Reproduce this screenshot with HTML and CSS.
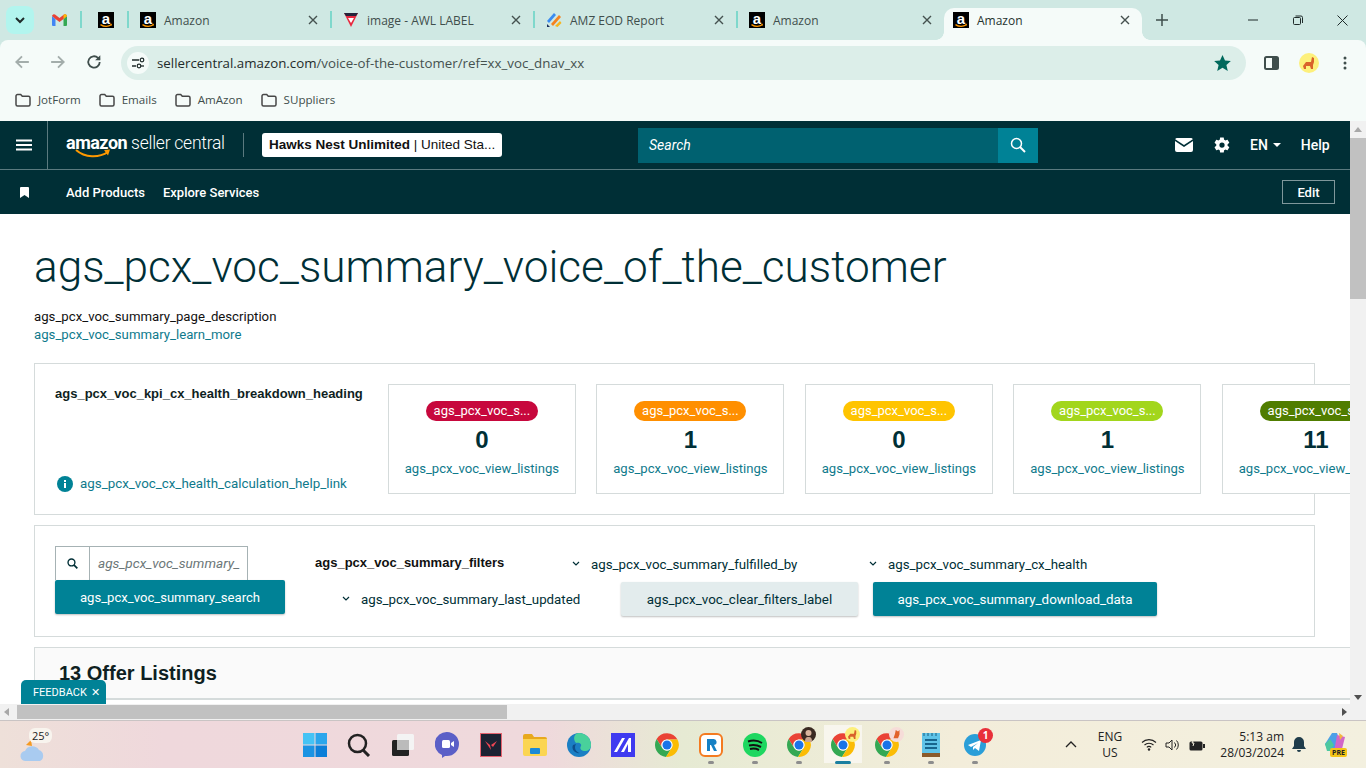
FILE: index.html
```html
<!DOCTYPE html>
<html>
<head>
  <title>Amazon</title>
  <link rel="stylesheet" href="styles.css">
</head>
<body>
  <svg class="defs" width="0" height="0">
    <symbol id="az" viewBox="0 0 16 16">
      <rect width="16" height="16" fill="#000"/>
      <path d="M2.500 12.600c3.500 2.200 7.500 2.200 11 .2" fill="none" stroke="#f90" stroke-width="1.300"/>
      <path d="M12 12l2-.2-.6 2z" fill="#f90"/>
    </symbol>
    <symbol id="chrome" viewBox="0 0 48 48">
      <path fill="#ea4335" d="M24 13H45A24 24 0 0 0 3.200 12L14.400 30A11 11 0 0 1 24 13z"/>
      <path fill="#34a853" d="M3.200 12A24 24 0 0 0 22 47.900L33.500 29.500A11 11 0 0 1 14.400 30z"/>
      <path fill="#fbbc04" d="M45 13A24 24 0 0 1 22 47.900L33.500 29.500A11 11 0 0 0 24 13z"/>
      <circle cx="24" cy="24" r="11" fill="#fff"/>
      <circle cx="24" cy="24" r="9" fill="#1a73e8"/>
    </symbol>
    <symbol id="folder" viewBox="0 0 16 14">
      <path d="M1 3a1.500 1.500 0 0 1 1.500-1.500h3.200l1.600 1.800h6.200A1.500 1.500 0 0 1 15 4.800v6.700a1.500 1.500 0 0 1-1.500 1.500h-11A1.500 1.500 0 0 1 1 11.500z" fill="none" stroke="#474747" stroke-width="1.500"/>
    </symbol>
    <symbol id="x" viewBox="0 0 10 10">
      <path d="M1 1l8 8M9 1l-8 8" stroke="#45514f" stroke-width="1.400" fill="none"/>
    </symbol>
    <symbol id="chev" viewBox="0 0 8 6">
      <path d="M1 1l3 3 3-3" stroke="#002f36" stroke-width="1.200" fill="none"/>
    </symbol>
  </svg>

  <div class="tabstrip">
    <div class="tab-search"><svg width="10" height="7" viewBox="0 0 10 7"><path d="M1 1l4 4 4-4" stroke="#1f2b2a" stroke-width="2" fill="none"/></svg></div>
    <div class="tab pinned first">
      <svg width="15" height="12" viewBox="0 0 15 12"><path d="M0 2v9a1 1 0 0 0 1 1h2.500V5z" fill="#4285f4"/><path d="M15 2v9a1 1 0 0 1-1 1h-2.500V5z" fill="#34a853"/><path d="M0 2a2 2 0 0 1 3-1.500L7.500 4 12 .5A2 2 0 0 1 15 2l-3.500 3-4 3-4-3z" fill="#ea4335"/><path d="M11.500 1l1-.7A2 2 0 0 1 15 2l-3.500 3z" fill="#fbbc04"/></svg>
    </div>
    <div class="tab pinned"><svg class="fav"><use href="#az"/></svg><span class="fav-a">a</span></div>
    <div class="tab">
      <svg class="fav"><use href="#az"/></svg><span class="fav-a">a</span>
      <span class="tab-title">Amazon</span><svg class="tab-x"><use href="#x"/></svg>
    </div>
    <div class="tab">
      <svg class="fav" viewBox="0 0 16 16"><path d="M1 1h14l-7 14z" fill="#e8293f"/><path d="M1 1h14l-2 3H3z" fill="#24243a"/><path d="M5 6h6l-3 5z" fill="#fff"/></svg>
      <span class="tab-title">image - AWL LABEL</span><svg class="tab-x"><use href="#x"/></svg>
    </div>
    <div class="tab">
      <svg class="fav" viewBox="0 0 16 16"><path d="M1 9l7-8 2 2-7 8z" fill="#3a8bf0"/><path d="M5 12l8-9 2 2-8 9z" fill="#f5821f"/><path d="M9 14l5-5 1.500 2-4 4z" fill="#f7b51c"/><path d="M1 12l3 3H1z" fill="#1c2f5c"/></svg>
      <span class="tab-title">AMZ EOD Report</span><svg class="tab-x"><use href="#x"/></svg>
    </div>
    <div class="tab last">
      <svg class="fav"><use href="#az"/></svg><span class="fav-a">a</span>
      <span class="tab-title">Amazon</span><svg class="tab-x"><use href="#x"/></svg>
    </div>
    <div class="tab active">
      <svg class="fav"><use href="#az"/></svg><span class="fav-a">a</span>
      <span class="tab-title">Amazon</span><svg class="tab-x"><use href="#x"/></svg>
    </div>
    <svg class="tab-plus" width="12" height="12" viewBox="0 0 12 12"><path d="M6 0v12M0 6h12" stroke="#3f4e4c" stroke-width="1.500"/></svg>
    <div class="win-controls">
      <svg width="10" height="10" viewBox="0 0 10 10"><path d="M0 5h10" stroke="#1f2b2a"/></svg>
      <svg width="10" height="10" viewBox="0 0 10 10"><rect x=".5" y="2.500" width="7" height="7" rx="1" fill="none" stroke="#1f2b2a"/><path d="M2.500 1h5.500a1.500 1.500 0 0 1 1.500 1.500v5.500" fill="none" stroke="#1f2b2a"/></svg>
      <svg width="11" height="11" viewBox="0 0 11 11"><path d="M.5.500l10 10M10.500.500l-10 10" stroke="#1f2b2a"/></svg>
    </div>
  </div>

  <div class="toolbar">
    <svg class="nav-ico" viewBox="0 0 14 14"><path d="M13 7H2M7 2L2 7l5 5" fill="none" stroke="#a3adab" stroke-width="1.600"/></svg>
    <svg class="nav-ico" viewBox="0 0 14 14"><path d="M1 7h11M7 2l5 5-5 5" fill="none" stroke="#a3adab" stroke-width="1.600"/></svg>
    <svg class="nav-ico" viewBox="0 0 14 14"><path d="M12 7a5 5 0 1 1-1.500-3.600L12 5" fill="none" stroke="#3f4e4c" stroke-width="1.600"/><path d="M12.500 1v4.500H8z" fill="#3f4e4c"/></svg>
    <div class="omnibox">
      <span class="site-info"><svg width="14" height="12" viewBox="0 0 14 12"><path d="M1 3h7M1 9h4" stroke="#1f2b2a" stroke-width="1.300"/><circle cx="11" cy="3" r="1.800" fill="none" stroke="#1f2b2a" stroke-width="1.200"/><circle cx="8" cy="9" r="1.800" fill="none" stroke="#1f2b2a" stroke-width="1.200"/><path d="M10 9h3" stroke="#1f2b2a" stroke-width="1.300"/></svg></span>
      <span class="url">sellercentral.amazon.com<span class="url-path">/voice-of-the-customer/ref=xx_voc_dnav_xx</span></span>
      <svg class="star" width="17" height="16" viewBox="0 0 24 23"><path d="M12 0l3.600 8 8.400.8-6.400 5.600 2 8.600L12 18.400 4.400 23l2-8.600L0 8.800 8.400 8z" fill="#00695c"/></svg>
    </div>
    <svg class="side-ico" width="15" height="14" viewBox="0 0 15 14"><rect x="1" y="1" width="13" height="12" rx="1.500" fill="none" stroke="#3f4e4c" stroke-width="2"/><rect x="8" y="1" width="6" height="12" fill="#3f4e4c"/></svg>
    <svg class="avatar" width="20" height="20" viewBox="0 0 20 20"><circle cx="10" cy="10" r="10" fill="#fdf07c"/><path d="M4 13l3-4h5l1-5 2 1v4l-1 3v4h-2l-1-3H7v3H5z" fill="#d9622b"/></svg>
    <svg class="menu-ico" width="4" height="14" viewBox="0 0 4 14"><circle cx="2" cy="2" r="1.500" fill="#3f4e4c"/><circle cx="2" cy="7" r="1.500" fill="#3f4e4c"/><circle cx="2" cy="12" r="1.500" fill="#3f4e4c"/></svg>
  </div>

  <div class="bookmarks">
    <span class="bm"><svg width="16" height="14"><use href="#folder"/></svg>JotForm</span>
    <span class="bm"><svg width="16" height="14"><use href="#folder"/></svg>Emails</span>
    <span class="bm"><svg width="16" height="14"><use href="#folder"/></svg>AmAzon</span>
    <span class="bm"><svg width="16" height="14"><use href="#folder"/></svg>SUppliers</span>
  </div>

  <div class="viewport">
    <div class="viewport-row">
      <div class="page">
        <header class="sc-header">
          <div class="sc-top">
            <div class="burger"><svg width="16" height="12" viewBox="0 0 16 12"><path d="M0 1.500h16M0 6h16M0 10.500h16" stroke="#fff" stroke-width="2"/></svg></div>
            <div class="logo">
              <span class="logo-amazon">amazon</span> <span class="logo-rest">seller central</span>
              <svg class="logo-smile" width="36" height="10" viewBox="0 0 36 10"><path d="M1 1c9 8 23 8 32 2" fill="none" stroke="#f90" stroke-width="2"/><path d="M29 1l6-.5-2 6z" fill="#f90"/></svg>
            </div>
            <div class="account"><b>Hawks Nest Unlimited</b> | United Sta...</div>
            <div class="sc-search">
              <span class="sc-search-input">Search</span>
              <span class="sc-search-btn"><svg width="16" height="16" viewBox="0 0 16 16"><circle cx="6.500" cy="6.500" r="5" fill="none" stroke="#fff" stroke-width="1.500"/><path d="M10 10l5 5" stroke="#fff" stroke-width="2"/></svg></span>
            </div>
            <div class="sc-right">
              <svg class="mail" width="18" height="14" viewBox="0 0 18 14"><path d="M2 0h14a2 2 0 0 1 1.800 1.200L9 7 .2 1.200A2 2 0 0 1 2 0z" fill="#fff"/><path d="M0 3l9 6 9-6v9a2 2 0 0 1-2 2H2a2 2 0 0 1-2-2z" fill="#fff"/></svg>
              <svg class="gear" width="18" height="18" viewBox="0 0 24 24"><path fill="#fff" fill-rule="evenodd" d="M19.400 13c.1-.3.1-.7.1-1s0-.7-.1-1l2.100-1.600c.2-.2.2-.4.100-.6l-2-3.500c-.1-.2-.4-.3-.6-.2l-2.500 1c-.5-.4-1.100-.7-1.700-1L14.400 2.500c0-.3-.2-.5-.5-.5h-4c-.2 0-.4.200-.5.400L9 5.100c-.6.300-1.200.6-1.700 1l-2.500-1c-.2-.1-.5 0-.6.200l-2 3.500c-.1.200-.1.400.1.600L4.400 11c0 .3-.1.700-.1 1s0 .7.1 1l-2.100 1.600c-.2.200-.2.400-.1.600l2 3.500c.1.200.4.300.6.200l2.500-1c.5.400 1.100.7 1.700 1l.4 2.600c0 .3.200.5.500.5h4c.2 0 .5-.2.5-.4l.4-2.700c.6-.3 1.200-.6 1.700-1l2.500 1c.2.100.5 0 .6-.2l2-3.500c.1-.2.100-.4-.1-.6zM12 15.500a3.500 3.500 0 1 1 0-7 3.500 3.500 0 0 1 0 7z"/></svg>
              <span class="lang">EN</span><span class="caret"></span>
              <span class="help">Help</span>
            </div>
          </div>
          <div class="sc-bottom">
            <svg class="bookmark" width="9" height="11" viewBox="0 0 9 11"><path d="M0 1a1 1 0 0 1 1-1h7a1 1 0 0 1 1 1v10L4.500 8 0 11z" fill="#fff"/></svg>
            <a class="nav-link">Add Products</a>
            <a class="nav-link">Explore Services</a>
            <span class="edit-btn">Edit</span>
          </div>
        </header>

        <main class="content">
          <h1 class="title">ags_pcx_voc_summary_voice_of_the_customer</h1>
          <p class="desc">ags_pcx_voc_summary_page_description</p>
          <a class="link learn">ags_pcx_voc_summary_learn_more</a>

          <section class="card kpi-card">
            <div class="kpi-side">
              <div class="kpi-heading">ags_pcx_voc_kpi_cx_health_breakdown_heading</div>
              <div class="kpi-help">
                <svg width="16" height="16" viewBox="0 0 16 16"><circle cx="8" cy="8" r="8" fill="#008296"/><rect x="7" y="7" width="2" height="5" fill="#fff"/><rect x="7" y="4" width="2" height="2" fill="#fff"/></svg>
                <a class="link help-link">ags_pcx_voc_cx_health_calculation_help_link</a>
              </div>
            </div>
            <div class="tile"><span class="pill pill-red">ags_pcx_voc_s...</span><span class="num">0</span><a class="link">ags_pcx_voc_view_listings</a></div>
            <div class="tile"><span class="pill pill-orange">ags_pcx_voc_s...</span><span class="num">1</span><a class="link">ags_pcx_voc_view_listings</a></div>
            <div class="tile"><span class="pill pill-yellow">ags_pcx_voc_s...</span><span class="num">0</span><a class="link">ags_pcx_voc_view_listings</a></div>
            <div class="tile"><span class="pill pill-lime">ags_pcx_voc_s...</span><span class="num">1</span><a class="link">ags_pcx_voc_view_listings</a></div>
            <div class="tile"><span class="pill pill-green">ags_pcx_voc_s...</span><span class="num">11</span><a class="link">ags_pcx_voc_view_listings</a></div>
          </section>

          <section class="card filter-card">
            <div class="search-col">
              <div class="search-box">
                <span class="search-ico"><svg width="11" height="11" viewBox="0 0 16 16"><circle cx="6.500" cy="6.500" r="5" fill="none" stroke="#002f36" stroke-width="2"/><path d="M10 10l5 5" stroke="#002f36" stroke-width="2.500"/></svg></span>
                <span class="search-ph">ags_pcx_voc_summary_</span>
              </div>
              <button class="btn btn-primary btn-search">ags_pcx_voc_summary_search</button>
            </div>
            <div class="filter-col">
              <div class="filter-row row-one">
                <span class="filter-title">ags_pcx_voc_summary_filters</span>
                <span class="dropdown dd-fulfilled"><svg width="8" height="6"><use href="#chev"/></svg>ags_pcx_voc_summary_fulfilled_by</span>
                <span class="dropdown"><svg width="8" height="6"><use href="#chev"/></svg>ags_pcx_voc_summary_cx_health</span>
              </div>
              <div class="filter-row row-two">
                <span class="dropdown dd-updated"><svg width="8" height="6"><use href="#chev"/></svg>ags_pcx_voc_summary_last_updated</span>
                <button class="btn btn-light">ags_pcx_voc_clear_filters_label</button>
                <button class="btn btn-primary btn-download">ags_pcx_voc_summary_download_data</button>
              </div>
            </div>
          </section>

          <section class="listings"><h2>13 Offer Listings</h2></section>
        </main>
      </div>
      <div class="vscroll">
        <span class="arrow arrow-up"></span>
        <div class="vthumb"></div>
        <span class="arrow arrow-down"></span>
      </div>
    </div>
    <div class="hscroll">
      <span class="arrow arrow-left"></span>
      <div class="hthumb"></div>
      <span class="arrow arrow-right"></span>
    </div>
    <div class="feedback">FEEDBACK <span class="feedback-x">✕</span></div>
  </div>

  <footer class="taskbar">
    <div class="weather">
      <svg width="26" height="24" viewBox="0 0 26 24"><path d="M6 7l5-5 1 6z" fill="#f59a23"/><path d="M6 23a5 5 0 0 1-1-10 8 8 0 0 1 14-1 6 6 0 0 1 1 11z" fill="#a9cbf0"/></svg>
      <span class="temp">25°</span>
    </div>
    <div class="task-icons">
      <span class="ti"><svg width="24" height="24" viewBox="0 0 24 24"><path d="M0 0h11.500v11.500H0z" fill="#45c3f5"/><path d="M12.500 0H24v11.500H12.500z" fill="#2ba6ec"/><path d="M0 12.500h11.500V24H0z" fill="#1b93e3"/><path d="M12.500 12.500H24V24H12.500z" fill="#0b7ed8"/></svg></span>
      <span class="ti"><svg width="24" height="24" viewBox="0 0 24 24"><circle cx="10.500" cy="10.500" r="8.500" fill="none" stroke="#222" stroke-width="2.500"/><path d="M16 17l6 6" stroke="#222" stroke-width="3"/></svg></span>
      <span class="ti"><svg width="24" height="24" viewBox="0 0 24 24"><rect x="6" y="1" width="17" height="16" rx="1.500" fill="#f4f4f4"/><rect x="1" y="7" width="17" height="16" rx="1.500" fill="#222"/><rect x="6" y="7" width="12" height="10" fill="#bbb"/></svg></span>
      <span class="ti"><svg width="24" height="26" viewBox="0 0 24 26"><path d="M12 0a12 12 0 0 1 0 24h-2l-3 2v-3A12 12 0 0 1 12 0z" fill="#5b5fc7"/><rect x="7" y="8" width="8" height="8" rx="1.500" fill="#fff"/><path d="M16 11l3-2v6l-3-2z" fill="#fff"/></svg></span>
      <span class="ti"><svg width="22" height="24" viewBox="0 0 22 24"><rect x=".5" y=".5" width="21" height="23" fill="#1c2333" stroke="#e5636f"/><path d="M5 8l5 4 1 5zM17 8l-4 6-2-2z" fill="#f04654"/></svg></span>
      <span class="ti"><svg width="24" height="22" viewBox="0 0 24 22"><path d="M0 2a2 2 0 0 1 2-2h7l2 3h11a2 2 0 0 1 2 2v2H0z" fill="#e8a91e"/><path d="M0 5h24v15a2 2 0 0 1-2 2H2a2 2 0 0 1-2-2z" fill="#fbd552"/><rect x="7" y="14" width="10" height="6" rx="1" fill="#1b8ad6"/></svg></span>
      <span class="ti"><svg width="24" height="24" viewBox="0 0 24 24"><circle cx="12" cy="12" r="12" fill="#1b7fc4"/><path d="M12 0a12 12 0 0 1 12 12c0 4-3 6-6 6s-6-2-4-5c1-2-2-4-5-3C5 5 8 0 12 0z" fill="#49d19b"/><path d="M9 11c-2 3-1 8 4 9-5 1-9-4-7-8z" fill="#0d4f8c"/></svg></span>
      <span class="ti"><svg width="24" height="24" viewBox="0 0 24 24"><rect width="24" height="24" fill="#3f3af0"/><path d="M3 19L11 5h3L6 19zM10 19L18 5h2v14h-3V11l-4 8z" fill="#fff"/></svg></span>
      <span class="ti"><svg width="24" height="24"><use href="#chrome"/></svg></span>
      <span class="ti dot"><svg width="24" height="24" viewBox="0 0 24 24"><rect x="1" y="1" width="22" height="22" rx="5" fill="#fff" stroke="#f47b20" stroke-width="2"/><path d="M8 6h6a3 3 0 0 1 1 6l3 6h-3l-3-6h-1v6H8z" fill="#1580c4"/></svg></span>
      <span class="ti dot"><svg width="24" height="24" viewBox="0 0 24 24"><circle cx="12" cy="12" r="12" fill="#1ed760"/><path d="M5 8.500c5-1.500 10-1 14 1.500M6 12.500c4-1 8-.7 12 1.500M7 16c3-.7 6-.5 9 1" fill="none" stroke="#111" stroke-width="2"/></svg></span>
      <span class="ti dot"><svg width="24" height="24"><use href="#chrome"/></svg><svg class="badge-pic" width="15" height="15" viewBox="0 0 15 15"><circle cx="7.500" cy="7.500" r="7.500" fill="#3a2a22"/><path d="M4 15c0-4 1-5 3.500-5S11 11 11 15z" fill="#c9a58f"/><circle cx="7.500" cy="6" r="3" fill="#d9b59d"/></svg></span>
      <span class="ti dot current"><svg width="24" height="24"><use href="#chrome"/></svg><svg class="badge-pic" width="15" height="15" viewBox="0 0 20 20"><circle cx="10" cy="10" r="10" fill="#fdf07c"/><path d="M4 13l3-4h5l1-5 2 1v4l-1 3v4h-2l-1-3H7v3H5z" fill="#d9622b"/></svg></span>
      <span class="ti dot"><svg width="24" height="24"><use href="#chrome"/></svg><svg class="badge-pic" width="15" height="15" viewBox="0 0 20 20"><circle cx="10" cy="10" r="10" fill="#f6dcd8"/><path d="M6 15l2-6 1-5 3 2 2-2v6l-2 5z" fill="#e2622b"/></svg></span>
      <span class="ti dot"><svg width="18" height="24" viewBox="0 0 18 24"><rect width="18" height="22" fill="#5fc3e8"/><rect y="20" width="18" height="4" fill="#8a5a2b"/><path d="M3 7h12M3 11h12M3 15h12" stroke="#17658e" stroke-width="2"/><path d="M2 0v3M6 0v3M10 0v3M14 0v3" stroke="#1d5f80"/></svg></span>
      <span class="ti dot"><svg width="22" height="22" viewBox="0 0 22 22"><circle cx="11" cy="11" r="11" fill="#2a9ed8"/><path d="M4 11l13-5-2 11-4-3-2 2v-3l5-4-7 4z" fill="#fff"/></svg><span class="tg-badge">1</span></span>
    </div>
    <div class="tray">
      <svg class="tray-up" width="12" height="7" viewBox="0 0 12 7"><path d="M1 6l5-5 5 5" fill="none" stroke="#222" stroke-width="1.300"/></svg>
      <div class="lang-ind">ENG<br>US</div>
      <svg width="16" height="13" viewBox="0 0 16 13"><path d="M1 4.500a10 10 0 0 1 14 0M3.500 7a6.500 6.500 0 0 1 9 0M5.800 9.300a3 3 0 0 1 4.400 0" fill="none" stroke="#222" stroke-width="1.100"/><circle cx="8" cy="11.500" r="1.200" fill="#222"/></svg>
      <svg width="16" height="14" viewBox="0 0 16 14"><path d="M1 5h3l3-3v10L4 9H1z" fill="none" stroke="#222"/><path d="M9.500 4.500a3.500 3.500 0 0 1 0 5M11.500 2.500a6.500 6.500 0 0 1 0 9" fill="none" stroke="#222"/></svg>
      <svg width="16" height="12" viewBox="0 0 16 12"><rect x=".5" y="2.500" width="13" height="9" rx="1.500" fill="#222"/><rect x="14" y="5" width="2" height="4" fill="#222"/><path d="M5 0L3 4h2l-1 3" fill="none" stroke="#f5f0df"/></svg>
      <div class="clock"><span>5:13 am</span><span>28/03/2024</span></div>
      <svg class="bell" width="14" height="16" viewBox="0 0 14 16"><path d="M7 0a5 5 0 0 1 5 5v4l2 3H0l2-3V5a5 5 0 0 1 5-5zM5 13h4a2 2 0 0 1-4 0z" fill="#1f3c4a"/></svg>
      <div class="copilot">
        <svg width="24" height="20" viewBox="0 0 24 20"><path d="M9 0h5l3 8-6 10H5L2 11z" fill="#4d9fe8"/><path d="M14 2l8 2-3 12-8 3z" fill="#d267c8"/><path d="M2 11l5-5 4 6-4 6H4z" fill="#4dc89f"/><path d="M16 0l4 3-3 4z" fill="#f2b441"/></svg>
        <span class="pre">PRE</span>
      </div>
    </div>
  </footer>
</body>
</html>
```

FILE: styles.css
```css
* {
  box-sizing: border-box;
}

html, body {
  margin: 0;
  height: 768px;
  overflow: hidden;
}

body {
  display: flex;
  flex-direction: column;
  width: 1366px;
  font-family: Roboto, "Liberation Sans", sans-serif;
  color: #002f36;
  background: #cfe8e3;
}

.defs {
  position: absolute;
}

/* browser chrome */
.tabstrip {
  height: 40px;
  display: flex;
  align-items: flex-end;
  padding-left: 6px;
  background: #cfe8e3;
  font-family: "Open Sans", sans-serif;
  font-size: 12px;
  color: #3f4e4c;
}

.tab-search {
  width: 28px;
  height: 28px;
  margin-bottom: 6px;
  border-radius: 8px;
  background: #b2f5ee;
  display: flex;
  align-items: center;
  justify-content: center;
}

.tab {
  position: relative;
  width: 203px;
  height: 32px;
  display: flex;
  align-items: center;
  padding: 0 10px 8px 11px;
  border-right: 2px solid #7fd8cc;
  border-image: linear-gradient(transparent 4px, #7fd8cc 4px, #7fd8cc 20px, transparent 20px) 1;
}

.tab.pinned {
  width: 47px;
  padding: 0 0 8px 16px;
}

.tab.first {
  width: 48px;
  padding-left: 18px;
}

.tab.last {
  width: 206px;
  border: 0;
}

.tab.active {
  width: 198px;
  padding-left: 9px;
  border: 0;
  border-radius: 10px 10px 0 0;
  background: #f5fbf9;
  color: #26332f;
}

.tab.active::before,
.tab.active::after {
  content: "";
  position: absolute;
  bottom: 0;
  width: 8px;
  height: 8px;
}

.tab.active::before {
  left: -8px;
  background: radial-gradient(circle at 0 0, #cfe8e3 7.500px, #f5fbf9 8px);
}

.tab.active::after {
  right: -8px;
  background: radial-gradient(circle at 100% 0, #cfe8e3 7.500px, #f5fbf9 8px);
}

.fav {
  width: 16px;
  height: 16px;
  flex: none;
}

.fav-a {
  margin-left: -16px;
  width: 16px;
  height: 16px;
  text-align: center;
  font: bold 15px/13px "Liberation Sans", sans-serif;
  color: #fff;
}

.tab-title {
  flex: 1;
  margin-left: 8px;
  white-space: nowrap;
}

.tab-x {
  width: 10px;
  height: 10px;
  margin-right: 2px;
}

.tab-plus {
  margin: 0 0 14px 14px;
}

.win-controls {
  margin-left: auto;
  width: 118px;
  padding: 0 18px 0 0;
  height: 40px;
  display: flex;
  align-items: center;
  justify-content: space-between;
  align-self: flex-start;
}

.toolbar {
  height: 40px;
  display: flex;
  align-items: flex-end;
  background: #f5fbf9;
  padding-left: 14px;
  border-radius: 8px 8px 0 0;
}

.nav-ico {
  width: 16px;
  height: 16px;
  margin: 0 20px 10px 0;
}

.omnibox {
  width: 1125px;
  height: 34px;
  margin-left: -1px;
  display: flex;
  align-items: center;
  padding: 0 15px 0 6px;
  border-radius: 17px;
  background: #dceee9;
}

.site-info {
  width: 22px;
  height: 22px;
  border-radius: 50%;
  background: #f5fbf9;
  display: flex;
  align-items: center;
  justify-content: center;
}

.url {
  flex: 1;
  margin-left: 8px;
  font: 13.300px "Open Sans", sans-serif;
  color: #1f2b2a;
}

.url-path {
  color: #45514f;
}

.side-ico {
  margin: 0 0 10px 18px;
}

.avatar {
  margin: 0 0 7px 20px;
}

.menu-ico {
  margin: 0 0 10px 24px;
}

.bookmarks {
  height: 41px;
  display: flex;
  align-items: center;
  padding: 0 0 2px 15px;
  background: #f5fbf9;
  font: 11.600px "Open Sans", sans-serif;
  color: #3f4e4c;
}

.bm {
  display: flex;
  align-items: center;
  gap: 7px;
  margin-right: 18px;
}

/* page area */
.viewport {
  position: relative;
  height: 599px;
  background: #fff;
  display: flex;
  flex-direction: column;
}

.viewport-row {
  height: 583px;
  display: flex;
}

.page {
  width: 1350px;
  overflow: hidden;
}

.vscroll {
  width: 16px;
  background: #f1f1f1;
  display: flex;
  flex-direction: column;
  align-items: center;
}

.vthumb {
  width: 16px;
  height: 161px;
  background: #c1c1c1;
}

.hscroll {
  height: 16px;
  background: #f1f1f1;
  display: flex;
  align-items: center;
}

.hthumb {
  width: 490px;
  height: 14px;
  margin-left: 8px;
  background: #c1c1c1;
}

.arrow {
  width: 0;
  height: 0;
  border: 4px solid transparent;
}

.arrow-up {
  height: 5px;
  border-width: 0 4px 5px;
  border-bottom-color: #a8a8a8;
  margin: 6px 0;
}

.arrow-down {
  margin-top: auto;
  margin-bottom: 4px;
  border-width: 5px 4px 0;
  border-top-color: #505050;
}

.arrow-left {
  margin-left: 4px;
  border-width: 4px 5px 4px 0;
  border-right-color: #a8a8a8;
}

.arrow-right {
  margin-left: auto;
  margin-right: 19px;
  border-width: 4px 0 4px 5px;
  border-left-color: #505050;
}

.feedback {
  position: absolute;
  left: 21px;
  top: 559px;
  width: 85px;
  height: 24px;
  padding: 6px 0 0 12px;
  border-radius: 5px 5px 0 0;
  background: #008296;
  color: #fff;
  font-size: 11px;
  line-height: 14px;
  white-space: nowrap;
}

.feedback-x {
  margin-left: 1px;
}

/* seller central header */
.sc-header {
  background: #002f36;
  color: #fff;
}

.sc-top {
  position: relative;
  height: 49px;
  display: flex;
  align-items: center;
  border-bottom: 1px solid #5a7a7f;
}

.burger {
  width: 48px;
  height: 48px;
  border-right: 1px solid #5a7a7f;
  display: flex;
  align-items: center;
  justify-content: center;
}

.logo {
  position: relative;
  width: 178px;
  height: 24px;
  margin-left: 18px;
  border-right: 1px solid #5a7a7f;
  white-space: nowrap;
  line-height: 20px;
}

.logo-amazon {
  font-size: 18px;
  font-weight: 700;
  letter-spacing: -.5px;
}

.logo-rest {
  font-size: 17.500px;
  font-weight: 300;
  letter-spacing: -.25px;
}

.logo-smile {
  position: absolute;
  left: 9px;
  top: 16px;
}

.account {
  width: 240px;
  height: 24px;
  margin-left: 18px;
  padding-left: 7px;
  border-radius: 3px;
  background: #fff;
  color: #111;
  font: 13.500px/24px "Liberation Sans", sans-serif;
  white-space: nowrap;
}

.sc-search {
  width: 400px;
  height: 35px;
  margin-left: 136px;
  display: flex;
  background: #006170;
}

.sc-search-input {
  flex: 1;
  padding-left: 11px;
  font-style: italic;
  font-size: 14px;
  line-height: 34px;
}

.sc-search-btn {
  width: 40px;
  background: #008296;
  display: flex;
  align-items: center;
  justify-content: center;
}

.sc-right {
  flex: 1;
  display: flex;
  align-items: center;
  padding-left: 137px;
  font-size: 14px;
  font-weight: 500;
}

.gear {
  margin-left: 20px;
}

.lang {
  margin-left: 19px;
}

.caret {
  margin-left: 5px;
  border: 4.500px solid transparent;
  border-top-color: #fff;
  border-bottom-width: 0;
}

.help {
  margin-left: 20px;
}

.sc-bottom {
  height: 44px;
  display: flex;
  align-items: center;
  padding-left: 20px;
}

.nav-link {
  margin-right: 18px;
  font-size: 13px;
  font-weight: 500;
}

.bookmark {
  margin-right: 37px;
}

.edit-btn {
  margin-left: auto;
  margin-right: 15px;
  width: 53px;
  height: 24px;
  border: 1px solid #7f979b;
  text-align: center;
  font-size: 13px;
  font-weight: 500;
  line-height: 23px;
}

/* content */
.content {
  padding: 0 35px 0 34px;
}

.title {
  margin: 26px 0 0;
  height: 54px;
  font-size: 44.150px;
  font-weight: 300;
  line-height: 55px;
  white-space: nowrap;
}

.desc {
  margin: 14px 0 0;
  font-size: 13.200px;
  line-height: 18px;
  color: #111;
}

.link {
  font-size: 13.100px;
  line-height: 18px;
  color: #0f7a8c;
  white-space: nowrap;
}

.learn {
  display: block;
  font-size: 13.200px;
}

.help-link {
  font-size: 13.350px;
}

.card {
  border: 1px solid #d5dbdb;
}

.kpi-card {
  height: 152px;
  margin-top: 19px;
  padding: 20px;
  display: flex;
  gap: 20.500px;
}

.kpi-side {
  flex: none;
  width: 312.400px;
  display: flex;
  flex-direction: column;
  justify-content: space-between;
}

.kpi-heading {
  padding-top: 1px;
  font: bold 13px/18px "Liberation Sans", sans-serif;
  color: #0f1f22;
}

.kpi-help {
  display: flex;
  align-items: center;
  gap: 7px;
  padding: 0 0 1px 2px;
}

.tile {
  flex: none;
  width: 188px;
  height: 110px;
  padding-top: 16px;
  border: 1px solid #d5dbdb;
  background: #fff;
  display: flex;
  flex-direction: column;
  align-items: center;
}

.pill {
  width: 112px;
  height: 20px;
  border-radius: 10px;
  color: #fff;
  font-size: 13px;
  line-height: 20px;
  text-align: center;
}

.pill-red { background: #c7083d; }
.pill-orange { background: #ff8f00; }
.pill-yellow { background: #ffc400; }
.pill-lime { background: #a2d61c; }
.pill-green { background: #507d00; }

.num {
  margin: 4px 0 5px;
  font: bold 24px/30px "Liberation Sans", sans-serif;
  color: #002f36;
}

.filter-card {
  height: 112px;
  margin-top: 10px;
  padding: 20px;
  display: flex;
  font-size: 13.300px;
}

.search-col {
  flex: none;
  width: 230px;
}

.search-box {
  width: 193px;
  height: 34px;
  display: flex;
  border: 1px solid #a6b2b4;
  border-bottom-width: 0;
}

.search-ico {
  width: 34px;
  border-right: 1px solid #a6b2b4;
  display: flex;
  align-items: center;
  justify-content: center;
}

.search-ph {
  padding-left: 8px;
  font-style: italic;
  font-size: 13.600px;
  line-height: 32px;
  color: #6c7778;
  white-space: nowrap;
  overflow: hidden;
}

.btn {
  flex: none;
  height: 34px;
  border: 0;
  border-radius: 2px;
  font-family: Roboto, sans-serif;
  font-size: 13.400px;
  box-shadow: 0 1px 2px rgba(0, 0, 0, .25);
  white-space: nowrap;
}

.btn-primary {
  background: #008296;
  color: #fff;
}

.btn-search {
  width: 230px;
  font-size: 13.100px;
}

.btn-light {
  width: 237px;
  margin-left: 40px;
  background: #e3eced;
  color: #002f36;
}

.btn-download {
  width: 284px;
  margin-left: 15px;
}

.filter-col {
  flex: 1;
}

.filter-row {
  display: flex;
  align-items: center;
}

.row-one {
  height: 34px;
  padding-left: 30px;
}

.row-two {
  margin-top: 2px;
  padding-left: 57px;
}

.filter-title {
  width: 257px;
  font: bold 13px "Liberation Sans", sans-serif;
  color: #111;
  margin-top: -2px;
}

.dropdown {
  flex: none;
  display: flex;
  align-items: center;
  gap: 11px;
  white-space: nowrap;
  margin-top: 2px;
}

.dropdown svg {
  flex: none;
}

.dd-updated {
  margin-top: 0;
  width: 239px;
}

.dd-fulfilled {
  width: 297px;
}

.listings {
  height: 53px;
  margin: 10px -35px 0 0;
  padding-left: 24px;
  border: 1px solid #d5dbdb;
  border-width: 1px 0 2px 1px;
  background: #fafafa;
}

.listings h2 {
  margin: 0;
  font: bold 20px/50px "Liberation Sans", sans-serif;
  color: #0f1f22;
}

/* windows taskbar */
.taskbar {
  height: 48px;
  display: flex;
  align-items: center;
  border-top: 1px solid #c9c4c4;
  background: linear-gradient(90deg, #eee0d9 0, #efd8dc 12%, #efd9dc 40%, #e6ead3 50%, #f3edda 70%, #f3f0df 100%);
  color: #222;
}

.weather {
  position: relative;
  width: 293px;
  height: 47px;
  padding: 17px 0 0 20px;
}

.temp {
  position: absolute;
  left: 29px;
  top: 7px;
  padding: 0 3px;
  border-radius: 6px;
  background: #f8f4ee;
  font: 11px/15px "Open Sans", sans-serif;
}

.task-icons {
  display: flex;
}

.ti {
  position: relative;
  width: 44px;
  height: 47px;
  display: flex;
  align-items: center;
  justify-content: center;
}

.dot::after {
  content: "";
  position: absolute;
  bottom: 4px;
  left: 19px;
  width: 6px;
  height: 3px;
  border-radius: 2px;
  background: #8d8d8d;
}

.current {
  background: linear-gradient(#f8f6ee, #f8f6ee) center 4px / 38px 38px no-repeat;
}

.current::after {
  left: 14px;
  width: 16px;
  background: #1a7fa0;
}

.badge-pic {
  position: absolute;
  left: 24px;
  top: 6px;
}

.tg-badge {
  position: absolute;
  left: 25px;
  top: 7px;
  width: 15px;
  height: 15px;
  border-radius: 50%;
  background: #e8303a;
  color: #fff;
  font: bold 10px/15px "Open Sans", sans-serif;
  text-align: center;
}

.tray {
  flex: 1;
  display: flex;
  align-items: center;
  padding-left: 68px;
  font: 12px/16px "Open Sans", sans-serif;
}

.lang-ind {
  width: 30px;
  margin: 0 16px 0 18px;
  text-align: center;
}

.tray svg + svg {
  margin-left: 8px;
}

.clock {
  width: 64px;
  margin-left: 15px;
  display: flex;
  flex-direction: column;
  align-items: flex-end;
}

.bell {
  margin-left: 8px;
}

.copilot {
  position: relative;
  margin-left: 17px;
}

.pre {
  position: absolute;
  left: 7px;
  top: 15px;
  padding: 0 2px;
  border-radius: 2px;
  background: #f5c518;
  font: bold 7px/9px "Open Sans", sans-serif;
}
```
